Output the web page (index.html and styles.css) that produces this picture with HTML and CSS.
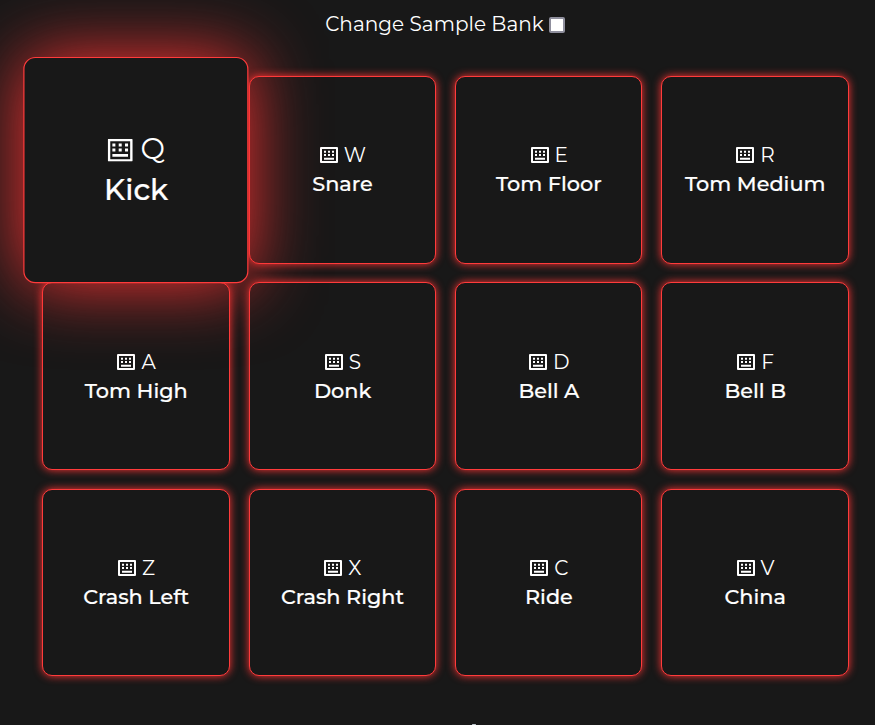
FILE: index.html
```html
<!DOCTYPE html>
<html lang="en"><head><meta charset="utf-8"><title>Drum Machine</title><link rel="stylesheet" href="styles.css"></head>
<body>
<svg width="0" height="0" class="defs"><symbol id="kb" viewBox="0 0 25 23"><path fill="none" stroke="currentColor" stroke-width="2.6" stroke-linejoin="round" d="M1.3 1.3h22.4v20.4H1.3z"/><path fill="currentColor" d="M4.7 4.8h3v3h-3zM11 4.8h3v3h-3zM17.3 4.8h3v3h-3zM4.7 9.8h3v3h-3zM11 9.8h3v3h-3zM17.3 9.8h3v3h-3zM4.7 15.3h15.6v2.7H4.7z"/></symbol>
<symbol id="kb-small" viewBox="0 0 18 16"><path fill="none" stroke="currentColor" stroke-width="2" stroke-linejoin="round" d="M1 1h16v14H1z"/><path fill="currentColor" d="M4 3.7h2v2H4zM8 3.7h2v2H8zM12 3.7h2v2h-2zM4 7h2v2H4zM8 7h2v2H8zM12 7h2v2h-2zM4 10.7h10v2H4z"/></symbol></svg>
<label class="bank"><span>Change Sample Bank</span><input type="checkbox"></label>
<main class="pads">
<button class="pad active"><span class="key"><svg><use href="#kb"/></svg><span>Q</span></span><strong>Kick</strong></button>
<button class="pad"><span class="key"><svg><use href="#kb-small"/></svg><span>W</span></span><strong>Snare</strong></button>
<button class="pad"><span class="key"><svg><use href="#kb-small"/></svg><span>E</span></span><strong>Tom Floor</strong></button>
<button class="pad"><span class="key"><svg><use href="#kb-small"/></svg><span>R</span></span><strong>Tom Medium</strong></button>
<button class="pad"><span class="key"><svg><use href="#kb-small"/></svg><span>A</span></span><strong>Tom High</strong></button>
<button class="pad"><span class="key"><svg><use href="#kb-small"/></svg><span>S</span></span><strong>Donk</strong></button>
<button class="pad"><span class="key"><svg><use href="#kb-small"/></svg><span>D</span></span><strong>Bell A</strong></button>
<button class="pad"><span class="key"><svg><use href="#kb-small"/></svg><span>F</span></span><strong>Bell B</strong></button>
<button class="pad"><span class="key"><svg><use href="#kb-small"/></svg><span>Z</span></span><strong>Crash Left</strong></button>
<button class="pad"><span class="key"><svg><use href="#kb-small"/></svg><span>X</span></span><strong>Crash Right</strong></button>
<button class="pad"><span class="key"><svg><use href="#kb-small"/></svg><span>C</span></span><strong>Ride</strong></button>
<button class="pad"><span class="key"><svg><use href="#kb-small"/></svg><span>V</span></span><strong>China</strong></button>
</main>
<div class="next"></div>
</body></html>
```
FILE: styles.css
```css
*{box-sizing:border-box}
body{margin:0;height:725px;overflow:hidden;background:#181818;color:#fff;font-family:Montserrat,"Open Sans",sans-serif;font-size:20px}
.defs{display:block}
.bank{display:flex;justify-content:center;align-items:center;gap:4px;height:48px;margin-left:14px}
.bank span{width:220px;text-align:center;white-space:nowrap;letter-spacing:.04px}
.bank input{appearance:none;margin:2px 0 0;width:16px;height:16px;background:#fff;border:2px solid #8f8f9d;border-radius:2px}
.pads{display:grid;grid-template-columns:repeat(4,187.4px);grid-auto-rows:187.5px;gap:18.9px 18.95px;margin:28.1px 0 0 42.3px}
.pad{display:flex;flex-direction:column;align-items:center;justify-content:center;padding:0;border:1px solid #ff3b3b;border-radius:10px;background:#181818;color:#fff;font:inherit;box-shadow:0 0 8px #f33}
.pad strong{font-weight:500;line-height:29px;font-size:20.8px;white-space:nowrap;margin-left:.5px;-webkit-text-stroke:.2px #fff}
.key{display:flex;align-items:center;gap:6px;line-height:29px;margin:0 0 -.8px 1.2px}
.key svg{width:18px;height:16px;margin-bottom:.8px}
.active{transform:translate(.4px,0) scale(1.204);z-index:1;box-shadow:0 0 60px #f33}
.active .key svg{width:21px;height:19.2px;margin:0 0 .4px -.6px}
.active .key{margin-bottom:-1px;margin-top:.4px}
.active .key,.active strong{font-size:24.2px;line-height:34px}
.active strong{font-size:24.4px;margin-left:0}
.next{width:4px;height:1px;margin:47.6px 0 0 472px;background:#bcc4cb;border-radius:1px}
```
